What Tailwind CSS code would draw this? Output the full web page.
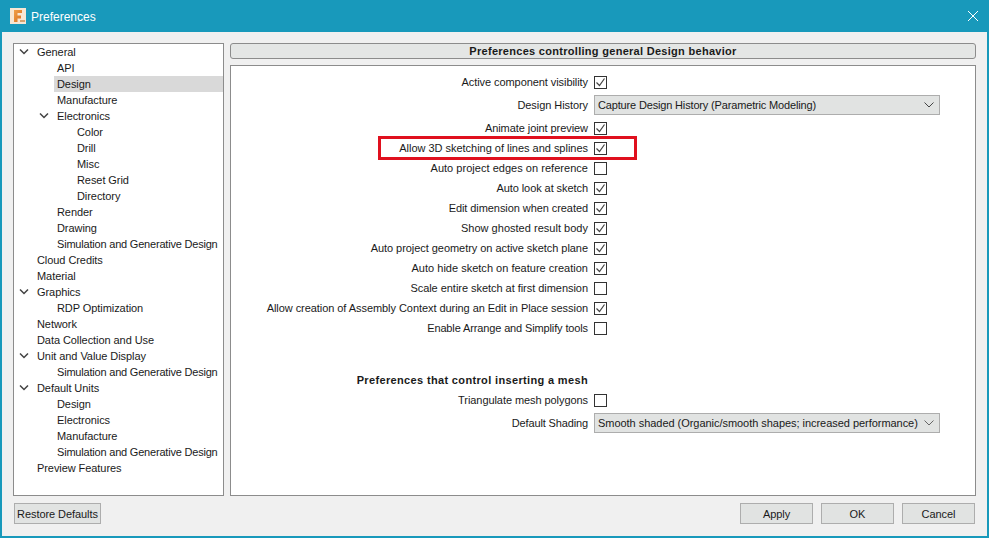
<!DOCTYPE html>
<html lang="en">

<head>
    <meta charset="UTF-8">
    <title>Preferences</title>
    <script src="https://cdn.jsdelivr.net/npm/@tailwindcss/browser@4"></script>
</head>

<body class="w-[989px] h-[538px] overflow-hidden bg-[#f0f0f0] font-['Liberation_Sans',Arial,sans-serif] text-[11px] tracking-[-0.07px] whitespace-nowrap text-[#1a1a1a]">
    <div class="w-full h-full flex flex-col border-2 border-t-0 border-[#1899bb]">
        <!-- title bar -->
        <div class="h-[32px] -mx-[2px] bg-[#1899bb] flex items-center pl-[10px] pr-[10px] text-white text-[12px] tracking-normal">
            <svg class="w-[16px] h-[16px] mr-[5px]" viewBox="0 0 16 16">
                <defs>
                    <linearGradient id="logoF" x1="0" y1="0" x2="1" y2="1">
                        <stop offset="0" stop-color="#f0a04a" />
                        <stop offset="1" stop-color="#d9701f" />
                    </linearGradient>
                </defs>
                <rect width="16" height="16" fill="#f8e6d3" />
                <path d="M4 2h8v3H7.500v2.500H11v3H7.500V14H4z" fill="url(#logoF)" />
                <rect x="10" y="12" width="5" height="2" fill="#d9a36f" />
            </svg>
            <span class="flex-1 pt-[1px]">Preferences</span>
            <svg class="w-[12px] h-[12px]" viewBox="0 0 12 12" fill="none" stroke="#fff" stroke-width="1">
                <path d="M1 1l10 10M11 1L1 11" />
            </svg>
        </div>

        <div class="flex flex-1 pt-[11px] pl-[11px] pr-[11px] gap-[6px]">
            <!-- tree -->
            <div class="w-[211px] h-[453px] bg-white border border-[#8c8c8c] leading-[16px]">
                <div class="h-[16px] pl-[23px] relative"><svg class="absolute left-[5px] top-[5px] w-[10px] h-[6px]" viewBox="0 0 10 6" fill="none" stroke="#444" stroke-width="1.500"><path d="M1 .5l4 4 4-4" /></svg>General</div>
                <div class="h-[16px] pl-[43px]">API</div>
                <div class="h-[16px] ml-[40px] pl-[3px] bg-[#d9d9d9]">Design</div>
                <div class="h-[16px] pl-[43px]">Manufacture</div>
                <div class="h-[16px] pl-[43px] relative"><svg class="absolute left-[25px] top-[5px] w-[10px] h-[6px]" viewBox="0 0 10 6" fill="none" stroke="#444" stroke-width="1.500"><path d="M1 .5l4 4 4-4" /></svg>Electronics</div>
                <div class="h-[16px] pl-[63px]">Color</div>
                <div class="h-[16px] pl-[63px]">Drill</div>
                <div class="h-[16px] pl-[63px]">Misc</div>
                <div class="h-[16px] pl-[63px]">Reset Grid</div>
                <div class="h-[16px] pl-[63px]">Directory</div>
                <div class="h-[16px] pl-[43px]">Render</div>
                <div class="h-[16px] pl-[43px]">Drawing</div>
                <div class="h-[16px] pl-[43px] tracking-[-0.2px]">Simulation and Generative Design</div>
                <div class="h-[16px] pl-[23px]">Cloud Credits</div>
                <div class="h-[16px] pl-[23px]">Material</div>
                <div class="h-[16px] pl-[23px] relative"><svg class="absolute left-[5px] top-[5px] w-[10px] h-[6px]" viewBox="0 0 10 6" fill="none" stroke="#444" stroke-width="1.500"><path d="M1 .5l4 4 4-4" /></svg>Graphics</div>
                <div class="h-[16px] pl-[43px]">RDP Optimization</div>
                <div class="h-[16px] pl-[23px]">Network</div>
                <div class="h-[16px] pl-[23px]">Data Collection and Use</div>
                <div class="h-[16px] pl-[23px] relative"><svg class="absolute left-[5px] top-[5px] w-[10px] h-[6px]" viewBox="0 0 10 6" fill="none" stroke="#444" stroke-width="1.500"><path d="M1 .5l4 4 4-4" /></svg>Unit and Value Display</div>
                <div class="h-[16px] pl-[43px] tracking-[-0.2px]">Simulation and Generative Design</div>
                <div class="h-[16px] pl-[23px] relative"><svg class="absolute left-[5px] top-[5px] w-[10px] h-[6px]" viewBox="0 0 10 6" fill="none" stroke="#444" stroke-width="1.500"><path d="M1 .5l4 4 4-4" /></svg>Default Units</div>
                <div class="h-[16px] pl-[43px]">Design</div>
                <div class="h-[16px] pl-[43px]">Electronics</div>
                <div class="h-[16px] pl-[43px]">Manufacture</div>
                <div class="h-[16px] pl-[43px] tracking-[-0.2px]">Simulation and Generative Design</div>
                <div class="h-[16px] pl-[23px]">Preview Features</div>
            </div>

            <!-- right side -->
            <div class="flex-1 flex flex-col gap-[6px]">
                <div class="h-[16px] bg-[#e4e6e5] border border-[#8c8c8c] rounded-[3px] flex items-center justify-center font-bold tracking-[0.29px]">Preferences controlling general Design behavior</div>
                <div class="h-[431px] bg-white border border-[#8c8c8c] pt-[6px]">
                    <div class="h-[20px] flex items-center gap-[6px]"><span class="w-[357px] text-right">Active component visibility</span><span class="w-[13px] h-[13px] border border-[#333] flex items-center justify-center"><svg class="w-[11px] h-[11px]" viewBox="0 0 11 11" fill="none" stroke="#444" stroke-width="1.200"><path d="M1.500 5.500l3 3 5-7" /></svg></span></div>
                    <div class="h-[26px] flex items-center gap-[6px]"><span class="w-[357px] text-right">Design History</span><div class="w-[346px] h-[20px] bg-[#e1e3e2] border border-[#adadad] flex items-center justify-between pl-[3px] pr-[5px]"><span class="tracking-[-0.16px]">Capture Design History (Parametric Modeling)</span><svg class="w-[10px] h-[6px]" viewBox="0 0 10 6" fill="none" stroke="#444" stroke-width="1"><path d="M.5.500l4.500 4.500 4.500-4.500" /></svg></div></div>
                    <div class="h-[20px] flex items-center gap-[6px]"><span class="w-[357px] text-right">Animate joint preview</span><span class="w-[13px] h-[13px] border border-[#333] flex items-center justify-center"><svg class="w-[11px] h-[11px]" viewBox="0 0 11 11" fill="none" stroke="#444" stroke-width="1.200"><path d="M1.500 5.500l3 3 5-7" /></svg></span></div>
                    <div class="h-[20px] flex items-center gap-[6px] relative"><div class="absolute left-[147px] top-[-2px] w-[259px] h-[24px] border-[3px] border-[#e0101e]"></div><span class="w-[357px] text-right tracking-[-0.02px]">Allow 3D sketching of lines and splines</span><span class="w-[13px] h-[13px] border border-[#333] flex items-center justify-center"><svg class="w-[11px] h-[11px]" viewBox="0 0 11 11" fill="none" stroke="#444" stroke-width="1.200"><path d="M1.500 5.500l3 3 5-7" /></svg></span></div>
                    <div class="h-[20px] flex items-center gap-[6px]"><span class="w-[357px] text-right tracking-[0.03px]">Auto project edges on reference</span><span class="w-[13px] h-[13px] border border-[#333]"></span></div>
                    <div class="h-[20px] flex items-center gap-[6px]"><span class="w-[357px] text-right">Auto look at sketch</span><span class="w-[13px] h-[13px] border border-[#333] flex items-center justify-center"><svg class="w-[11px] h-[11px]" viewBox="0 0 11 11" fill="none" stroke="#444" stroke-width="1.200"><path d="M1.500 5.500l3 3 5-7" /></svg></span></div>
                    <div class="h-[20px] flex items-center gap-[6px]"><span class="w-[357px] text-right">Edit dimension when created</span><span class="w-[13px] h-[13px] border border-[#333] flex items-center justify-center"><svg class="w-[11px] h-[11px]" viewBox="0 0 11 11" fill="none" stroke="#444" stroke-width="1.200"><path d="M1.500 5.500l3 3 5-7" /></svg></span></div>
                    <div class="h-[20px] flex items-center gap-[6px]"><span class="w-[357px] text-right tracking-[0.02px]">Show ghosted result body</span><span class="w-[13px] h-[13px] border border-[#333] flex items-center justify-center"><svg class="w-[11px] h-[11px]" viewBox="0 0 11 11" fill="none" stroke="#444" stroke-width="1.200"><path d="M1.500 5.500l3 3 5-7" /></svg></span></div>
                    <div class="h-[20px] flex items-center gap-[6px]"><span class="w-[357px] text-right tracking-[-0.05px]">Auto project geometry on active sketch plane</span><span class="w-[13px] h-[13px] border border-[#333] flex items-center justify-center"><svg class="w-[11px] h-[11px]" viewBox="0 0 11 11" fill="none" stroke="#444" stroke-width="1.200"><path d="M1.500 5.500l3 3 5-7" /></svg></span></div>
                    <div class="h-[20px] flex items-center gap-[6px]"><span class="w-[357px] text-right tracking-[0.01px]">Auto hide sketch on feature creation</span><span class="w-[13px] h-[13px] border border-[#333] flex items-center justify-center"><svg class="w-[11px] h-[11px]" viewBox="0 0 11 11" fill="none" stroke="#444" stroke-width="1.200"><path d="M1.500 5.500l3 3 5-7" /></svg></span></div>
                    <div class="h-[20px] flex items-center gap-[6px]"><span class="w-[357px] text-right tracking-[-0.04px]">Scale entire sketch at first dimension</span><span class="w-[13px] h-[13px] border border-[#333]"></span></div>
                    <div class="h-[20px] flex items-center gap-[6px]"><span class="w-[357px] text-right tracking-[-0.06px]">Allow creation of Assembly Context during an Edit in Place session</span><span class="w-[13px] h-[13px] border border-[#333] flex items-center justify-center"><svg class="w-[11px] h-[11px]" viewBox="0 0 11 11" fill="none" stroke="#444" stroke-width="1.200"><path d="M1.500 5.500l3 3 5-7" /></svg></span></div>
                    <div class="h-[20px] flex items-center gap-[6px]"><span class="w-[357px] text-right tracking-[-0.13px]">Enable Arrange and Simplify tools</span><span class="w-[13px] h-[13px] border border-[#333]"></span></div>

                    <div class="h-[20px] mt-[32px] flex items-center"><span class="w-[357px] text-right font-bold tracking-[0.35px]">Preferences that control inserting a mesh</span></div>
                    <div class="h-[20px] flex items-center gap-[6px]"><span class="w-[357px] text-right">Triangulate mesh polygons</span><span class="w-[13px] h-[13px] border border-[#333]"></span></div>
                    <div class="h-[26px] flex items-center gap-[6px]"><span class="w-[357px] text-right tracking-[-0.14px]">Default Shading</span><div class="w-[346px] h-[20px] bg-[#e1e3e2] border border-[#adadad] flex items-center justify-between pl-[3px] pr-[5px]"><span class="tracking-[-0.04px]">Smooth shaded (Organic/smooth shapes; increased performance)</span><svg class="w-[10px] h-[6px]" viewBox="0 0 10 6" fill="none" stroke="#666" stroke-width="1"><path d="M.5.500l4.500 4.500 4.500-4.500" /></svg></div></div>
                </div>
            </div>
        </div>

        <!-- footer buttons -->
        <div class="flex items-center pl-[12px] pr-[12px] pt-[7px] pb-[12px]">
            <button class="w-[87px] h-[21px] pt-[1px] bg-[#e1e3e2] border border-[#adadad]">Restore Defaults</button>
            <div class="flex-1"></div>
            <div class="flex gap-[8px]">
                <button class="w-[73px] h-[21px] pt-[1px] bg-[#e1e3e2] border border-[#adadad]">Apply</button>
                <button class="w-[73px] h-[21px] pt-[1px] bg-[#e1e3e2] border border-[#adadad]">OK</button>
                <button class="w-[73px] h-[21px] pt-[1px] bg-[#e1e3e2] border border-[#adadad]">Cancel</button>
            </div>
        </div>
    </div>
</body>

</html>
